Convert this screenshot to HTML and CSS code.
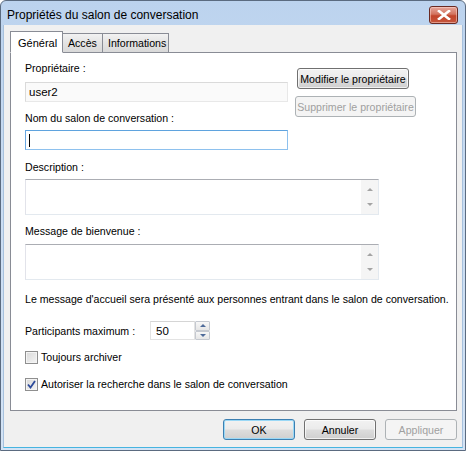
FILE: index.html
```html
<!DOCTYPE html>
<html lang="fr">
<head>
    <meta charset="UTF-8">
    <title>Propriétés du salon de conversation</title>
    <link rel="stylesheet" href="styles.css">
</head>
<body>
    <div class="window">
        <!-- barre de titre -->
        <div class="titlebar">
            <span class="title">Propriétés du salon de conversation</span>
            <button class="close-btn">
                <svg width="14" height="10" viewBox="0 0 14 10">
                    <path d="M2 1 L12 9 M12 1 L2 9" stroke="#fff" stroke-width="2.6" stroke-linecap="square"/>
                </svg>
            </button>
        </div>

        <div class="client">
            <div class="tabs">
                <div class="tab active">Général</div>
                <div class="tab">Accès</div>
                <div class="tab">Informations</div>
            </div>

            <div class="panel">
                <div class="owner-row">
                    <div class="owner-fields">
                        <div class="label">Propriétaire :</div>
                        <div class="field readonly">user2</div>
                        <div class="label label-gap">Nom du salon de conversation :</div>
                        <div class="field focused"><span class="caret"></span></div>
                    </div>
                    <div class="owner-buttons">
                        <button class="btn btn-modify">Modifier le propriétaire</button>
                        <button class="btn btn-remove" disabled>Supprimer le propriétaire</button>
                    </div>
                </div>

                <div class="label desc-label">Description :</div>
                <div class="textbox">
                    <div class="text-area"></div>
                    <div class="vscroll"><span class="arrow-up"></span><span class="arrow-down"></span></div>
                </div>

                <div class="label welcome-label">Message de bienvenue :</div>
                <div class="textbox">
                    <div class="text-area"></div>
                    <div class="vscroll"><span class="arrow-up"></span><span class="arrow-down"></span></div>
                </div>

                <p class="info">Le message d'accueil sera présenté aux personnes entrant dans le salon de conversation.</p>

                <div class="max-row">
                    <span class="max-label">Participants maximum :</span>
                    <div class="spin-field">50</div>
                    <div class="spin-buttons">
                        <div class="spin-btn"><span class="spin-up"></span></div>
                        <div class="spin-btn"><span class="spin-down"></span></div>
                    </div>
                </div>

                <label class="check-row first-check">
                    <span class="checkbox"></span>
                    Toujours archiver
                </label>
                <label class="check-row second-check">
                    <span class="checkbox">
                        <svg width="11" height="11" viewBox="0 0 11 11">
                            <path d="M2 5.5 L4.5 8.5 L9 2" stroke="#2c4a9a" stroke-width="1.8" fill="none"/>
                        </svg>
                    </span>
                    Autoriser la recherche dans le salon de conversation
                </label>
            </div>

            <div class="footer">
                <button class="btn btn-footer btn-default">OK</button>
                <button class="btn btn-footer">Annuler</button>
                <button class="btn btn-footer" disabled>Appliquer</button>
            </div>
        </div>
    </div>
</body>
</html>
```

FILE: styles.css
```css
/* fenêtre style Vista basique */
* {
    box-sizing: border-box;
}

body {
    margin: 0;
    font-family: "Liberation Sans", Arial, sans-serif;
    font-size: 10.6px;
    color: #000;
    background: #fff;
}

.window {
    width: 466px;
    height: 451px;
    display: flex;
    flex-direction: column;
    background: linear-gradient(180deg, #bcd3ee 0%, #c9dcf2 40%, #d3e3f5 100%);
    border: 1px solid #5b6b80;
    border-radius: 6px 6px 0 0;
    overflow: hidden;
}

.titlebar {
    height: 24px;
    display: flex;
    align-items: center;
    justify-content: space-between;
    padding: 0 6px 0 6px;
}

.title {
    font-size: 12px;
    color: #000;
    margin-top: 4px;
}

.close-btn {
    width: 29px;
    height: 18px;
    margin-top: 3px;
    margin-right: 1px;
    border: 1px solid #6a2a22;
    border-radius: 3px;
    background: linear-gradient(180deg, #e6a79c 0%, #d3745f 45%, #c2452b 55%, #c6563d 100%);
    box-shadow: inset 0 0 0 1px rgba(255, 220, 210, 0.5);
    display: flex;
    align-items: center;
    justify-content: center;
    padding: 0;
}

.client {
    flex: 1;
    margin: 0 2px 2px 2px;
    background: #f0f0f0;
    border-left: 1px solid #a7c1dd;
    border-right: 1px solid #a7c1dd;
    border-bottom: 1px solid #46b4e0;
    padding: 5px 0 0 6px;
    display: flex;
    flex-direction: column;
}

/* onglets */
.tabs {
    display: flex;
    align-items: flex-end;
    height: 22px;
    position: relative;
    z-index: 1;
}

.tab {
    height: 19px;
    padding: 0 5px;
    border: 1px solid #898c95;
    border-bottom: none;
    border-left: none;
    background: linear-gradient(180deg, #f2f2f2 0%, #e3e3e3 50%, #d9d9d9 100%);
    line-height: 18px;
    white-space: nowrap;
}

.tab:nth-child(2) {
    width: 40px;
}

.tab:nth-child(3) {
    width: 66px;
}

.tab.active {
    height: 22px;
    width: 53px;
    padding-left: 7px;
    border-left: 1px solid #898c95;
    background: #fff;
    line-height: 22px;
    margin-bottom: -1px;
    border-bottom: 1px solid #fff;
    font-size: 11px;
}

.panel {
    width: 447px;
    height: 359px;
    background: #fff;
    border: 1px solid #898c95;
    padding: 9px 0 0 14px;
    display: flex;
    flex-direction: column;
    align-items: flex-start;
}

.label {
    line-height: 13px;
    height: 13px;
    white-space: nowrap;
}

/* propriétaire */
.owner-row {
    display: flex;
}

.owner-fields {
    width: 263px;
    display: flex;
    flex-direction: column;
}

.field {
    height: 20px;
    width: 263px;
    margin-top: 7px;
    border: 1px solid #abadb3;
    padding: 0 3px;
    line-height: 18px;
    font-size: 11.5px;
}

.field.readonly {
    background: #fafafa;
    border-color: #dadada #e8e8e8 #e8e8e8 #dadada;
}

.field.focused {
    margin-top: 5px;
    border-color: #5fa3de #8ec1ee #8ec1ee #6aa8e2;
    background: #fff;
    display: flex;
    align-items: center;
}

.caret {
    width: 1px;
    height: 13px;
    background: #000;
}

.label-gap {
    margin-top: 10px;
}

.owner-buttons {
    display: flex;
    flex-direction: column;
    align-items: flex-start;
    margin-left: 9px;
    padding-top: 6px;
}

.btn {
    font-family: "Liberation Sans", Arial, sans-serif;
    font-size: 10.6px;
    color: #000;
    height: 21px;
    padding: 0;
    white-space: nowrap;
    border: 1px solid #707070;
    border-radius: 3px;
    background: linear-gradient(180deg, #f2f2f2 0%, #ebebeb 48%, #dddddd 52%, #cfcfcf 100%);
    box-shadow: inset 0 0 0 1px rgba(255, 255, 255, 0.7);
}

.btn:disabled {
    color: #a0a0a0;
    border-color: #adb2b5;
    background: #f4f4f4;
    box-shadow: none;
}

.btn-modify {
    width: 112px;
}

.btn-remove {
    width: 121px;
    margin-top: 7px;
    margin-left: -2px;
}

/* zones de texte */
.desc-label {
    margin-top: 11px;
}

.welcome-label {
    margin-top: 10px;
}

.textbox {
    margin-top: 5px;
    width: 354px;
    height: 36px;
    border: 1px solid #abadb3;
    border-color: #abadb3 #e3e9ef #e3e9ef #e2e3ea;
    display: flex;
    background: #fff;
}

.welcome-label + .textbox {
    margin-top: 6px;
}

.text-area {
    flex: 1;
}

.vscroll {
    width: 17px;
    background: #f5f5f5;
    display: flex;
    flex-direction: column;
    align-items: center;
    justify-content: space-between;
    padding: 8px 0 8px 0;
}

.arrow-up,
.arrow-down {
    width: 0;
    height: 0;
    border-left: 3px solid transparent;
    border-right: 3px solid transparent;
}

.arrow-up {
    border-bottom: 3px solid #a4a4a4;
}

.arrow-down {
    border-top: 3px solid #a4a4a4;
}

.info {
    margin: 13px 0 0 0;
    line-height: 13px;
    white-space: nowrap;
}

/* participants */
.max-row {
    display: flex;
    align-items: center;
    margin-top: 15px;
    height: 19px;
}

.max-label {
    width: 125px;
}

.spin-field {
    width: 45px;
    height: 19px;
    border: 1px solid #e3e3e3;
    border-top-color: #d5d5d5;
    padding: 0 5px;
    line-height: 18px;
    font-size: 11.5px;
}

.spin-buttons {
    display: flex;
    flex-direction: column;
    width: 15px;
    height: 19px;
}

.spin-btn {
    flex: 1;
    border: 1px solid #c5c9d0;
    border-radius: 1px;
    background: linear-gradient(180deg, #f7f7f7, #e6e6e6);
    display: flex;
    align-items: center;
    justify-content: center;
}

.spin-up,
.spin-down {
    width: 0;
    height: 0;
    border-left: 3px solid transparent;
    border-right: 3px solid transparent;
}

.spin-up {
    border-bottom: 3px solid #4e6b9a;
}

.spin-down {
    border-top: 3px solid #4e6b9a;
}

/* cases à cocher */
.check-row {
    display: flex;
    align-items: center;
    gap: 3px;
    height: 14px;
    font-size: 10.6px;
}

.first-check {
    margin-top: 10px;
}

.second-check {
    margin-top: 13px;
}

.checkbox {
    width: 13px;
    height: 13px;
    border: 1px solid #8f8f8f;
    background: linear-gradient(135deg, #d9d9d9, #f4f4f4);
    box-shadow: inset 0 0 0 1px #f4f4f4;
    display: flex;
    align-items: center;
    justify-content: center;
}

/* boutons du bas */
.footer {
    display: flex;
    justify-content: flex-end;
    gap: 9px;
    padding: 8px 5px 0 0;
}

.btn-footer {
    width: 72px;
}

.btn-default {
    border-color: #3c7fb1;
    box-shadow: inset 0 0 0 1px #9ad8f6;
}
```
